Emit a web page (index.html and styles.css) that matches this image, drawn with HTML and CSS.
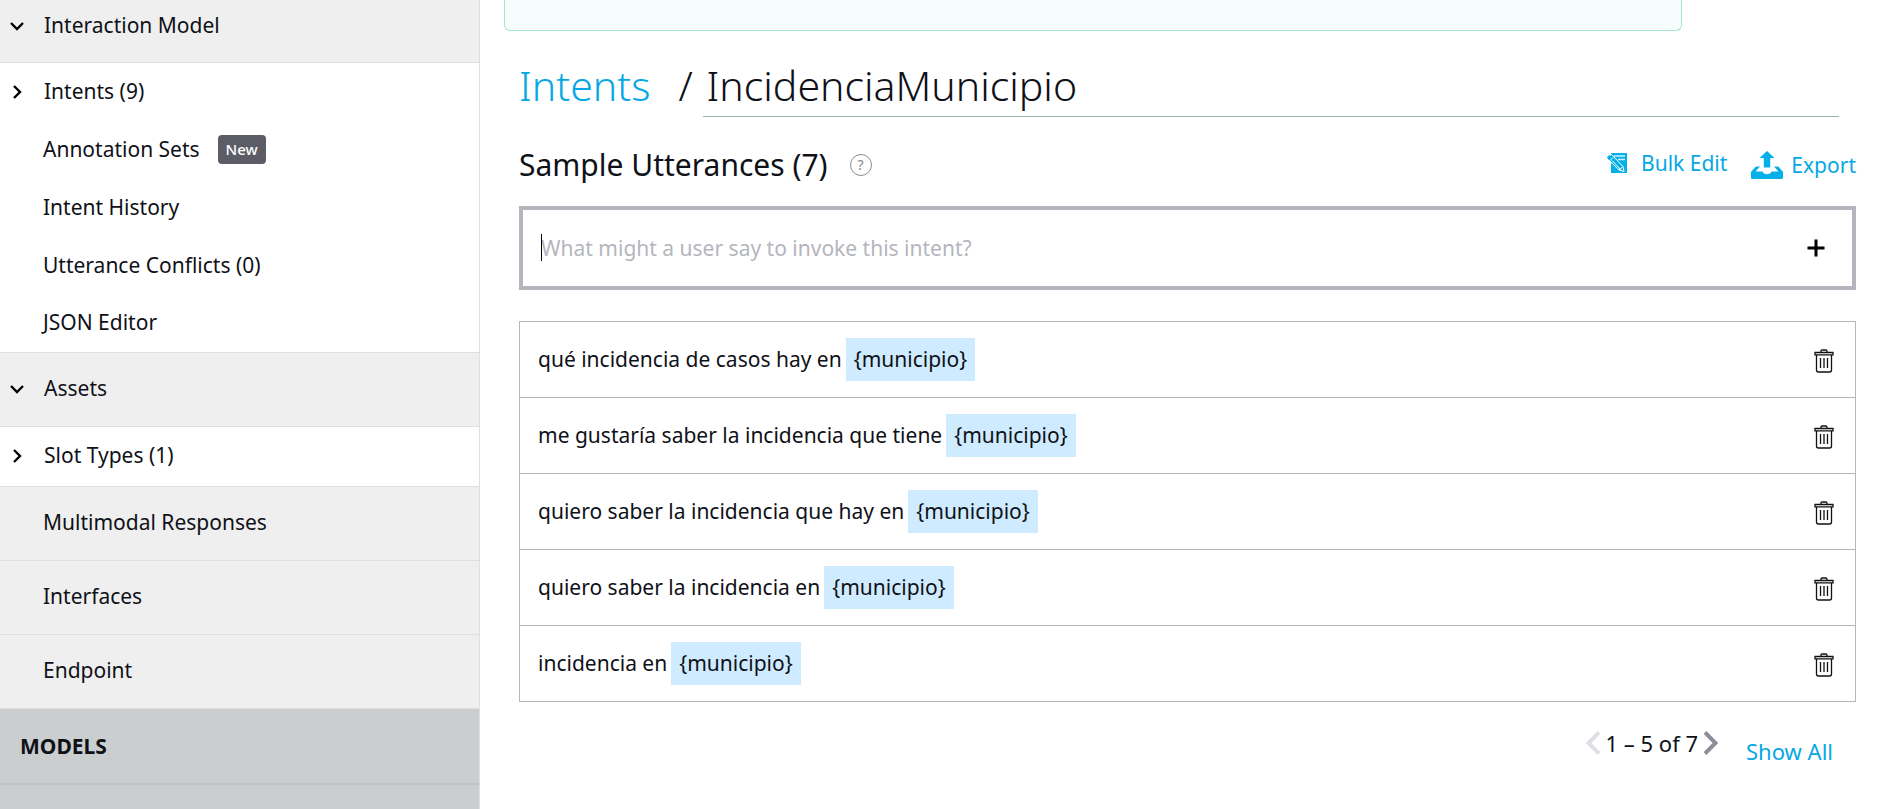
FILE: index.html
```html
<!DOCTYPE html>
<html lang="en">
<head>
<meta charset="utf-8">
<title>IncidenciaMunicipio – Intents</title>
<link rel="stylesheet" href="styles.css">
</head>
<body>
<svg class="defs" aria-hidden="true">
  <symbol id="down" viewBox="0 0 16 16"><path d="M2 5l6 6 6-6" fill="none" stroke="currentColor" stroke-width="2.4"/></symbol>
  <symbol id="right" viewBox="0 0 16 16"><path d="M5 2l6 6-6 6" fill="none" stroke="currentColor" stroke-width="2.4"/></symbol>
  <symbol id="trash" viewBox="0 0 20 24"><g fill="none" stroke="#111" stroke-width="1.3"><path d="M7 3V2.2Q7 1 8.200 1h3.600Q13 1 13 2.200V3"/><path d="M1 3.500h18v2.300H1z"/><path d="M2.500 6v15q0 2 2 2h11q2 0 2-2V6"/><path d="M6.500 9v10M10 9v10M13.500 9v10"/></g></symbol>
</svg>
<div class="page">
  <nav class="sidebar" aria-label="Skill builder">
    <a class="row row-top" href="#"><svg class="chev"><use href="#down"/></svg>Interaction Model</a>
    <div class="group">
      <a class="sub" href="#"><svg class="chev"><use href="#right"/></svg>Intents (9)</a>
      <a class="sub plain" href="#">Annotation Sets<span class="badge">New</span></a>
      <a class="sub plain" href="#">Intent History</a>
      <a class="sub plain" href="#">Utterance Conflicts (0)</a>
      <a class="sub plain" href="#">JSON Editor</a>
    </div>
    <a class="row" href="#"><svg class="chev"><use href="#down"/></svg>Assets</a>
    <div class="group">
      <a class="sub" href="#"><svg class="chev"><use href="#right"/></svg>Slot Types (1)</a>
    </div>
    <a class="row plain" href="#">Multimodal Responses</a>
    <a class="row plain" href="#">Interfaces</a>
    <a class="row plain" href="#">Endpoint</a>
    <h2 class="models">MODELS</h2>
    <div class="rest"></div>
  </nav>
  <main class="main">
    <div class="notice"></div>
    <div class="content">
      <div class="title">
        <a class="link" href="#">Intents</a><span class="slash">/</span>
        <input class="name" type="text" value="IncidenciaMunicipio" aria-label="Intent name">
      </div>
      <div class="head">
        <h1 class="heading">Sample Utterances (7)</h1>
        <button class="help" type="button" aria-label="Help">?</button>
        <button class="action bulk" type="button"><svg class="bulk-icon" viewBox="0 0 20 20"><path d="M4 0h16v20H4z" fill="#05b0e9"/><path d="M7 3h11M11 6.500h7" stroke="#cdeffb" stroke-width="1.300"/><path d="M2 3.500L4.500 1.500 16 13.500l1 5-5-1.500L.800 6z" fill="#05b0e9" stroke="#fff" stroke-width="1"/><path d="M3 7.500L6 4.500M5 7.500l8.500 9M12 17l3.500-3" stroke="#fff" stroke-width="1" fill="none"/><path d="M.500 5.500Q-.500 4 1 3q2-1.500 3.500.500L2 7z" fill="#05b0e9"/></svg>Bulk Edit</button>
        <button class="action" type="button"><svg class="export-icon" viewBox="0 0 32 28"><path d="M16 0l7.500 7H19.200v9.500h-6.400V7H8.500z" fill="#05b0e9"/><path d="M9 15.500L4.500 20.500h7q1 2.800 4.500 2.800t4.500-2.800h7L23 15.500h3.500q1 0 1.500.800L32 21v5.500q0 1.500-1.500 1.500h-29Q0 28 0 26.500V21l4-4.700q.500-.800 1.500-.800z" fill="#05b0e9"/></svg>Export</button>
      </div>
      <form class="entry">
        <input class="utter" type="text" placeholder="What might a user say to invoke this intent?" aria-label="New utterance">
        <button class="add" type="button" aria-label="Add utterance"><svg viewBox="0 0 18 18"><path d="M9 0.500v17M.500 9h17" stroke="#000" stroke-width="3"/></svg></button>
      </form>
      <ul class="list">
        <li class="item"><span>qué incidencia de casos hay en</span><span class="slot">{municipio}</span><button class="del" type="button" aria-label="Delete"><svg><use href="#trash"/></svg></button></li>
        <li class="item"><span>me gustaría saber la incidencia que tiene</span><span class="slot">{municipio}</span><button class="del" type="button" aria-label="Delete"><svg><use href="#trash"/></svg></button></li>
        <li class="item"><span>quiero saber la incidencia que hay en</span><span class="slot">{municipio}</span><button class="del" type="button" aria-label="Delete"><svg><use href="#trash"/></svg></button></li>
        <li class="item"><span>quiero saber la incidencia en</span><span class="slot">{municipio}</span><button class="del" type="button" aria-label="Delete"><svg><use href="#trash"/></svg></button></li>
        <li class="item"><span>incidencia en</span><span class="slot">{municipio}</span><button class="del" type="button" aria-label="Delete"><svg><use href="#trash"/></svg></button></li>
      </ul>
      <div class="pager">
        <button class="page-btn off" type="button" aria-label="Previous page"><svg viewBox="0 0 14 24"><path d="M13 1.500L2.500 12 13 22.500" fill="none" stroke="currentColor" stroke-width="4"/></svg></button>
        <span>1 – 5 of 7</span>
        <button class="page-btn" type="button" aria-label="Next page"><svg viewBox="0 0 14 24"><path d="M1 1.500L11.500 12 1 22.500" fill="none" stroke="currentColor" stroke-width="4"/></svg></button>
        <a class="show-all" href="#">Show All</a>
      </div>
    </div>
  </main>
</div>
</body>
</html>
```
FILE: styles.css
```css
* { box-sizing: border-box; }
body { margin: 0; background: #fff; color: #0f1118; font: 21px/28px "Noto Sans", "Open Sans", sans-serif; }
a { color: inherit; text-decoration: none; }
button { padding: 0; border: 0; background: none; font: inherit; color: inherit; }
svg { display: block; }
.defs { position: absolute; width: 0; height: 0; }
.page { display: flex; min-height: 100vh; }

.sidebar { display: flex; flex-direction: column; flex: 0 0 480px; max-height: 100vh; overflow: hidden; border-right: 1px solid #dcdedf; }
.row, .sub { display: flex; flex: none; align-items: center; padding-left: 9px; }
.row { height: 74px; padding-bottom: 3px; background: #efefef; border-bottom: 1px solid #dfdfdf; }
.row-top { height: 63px; padding-bottom: 13px; }
.group { flex: none; }
.sub { height: 58px; padding-bottom: 3px; }
.sub:last-child { border-bottom: 1px solid #dfdfdf; }
.sub:only-child { height: 60px; }
.plain { padding-left: 43px; }
.chev { width: 16px; height: 16px; margin: 2px 19px 0 0; color: #000; }
.badge { margin: 2px 0 0 18px; padding: 0 8px; border-radius: 4px; background: #5c5c66; color: #fff; font-size: 15px; font-weight: 500; line-height: 29px; }
.models { display: flex; flex: none; align-items: center; height: 76px; margin: 0; padding-left: 20px; background: #cbcecf; border-bottom: 2px solid #bfc1c2; font-size: 21px; font-weight: 700; }
.rest { flex: 1; background: #cbcecf; }

.main { flex: 1; min-width: 0; padding: 0 29px 0 24px; }
.notice { height: 31px; margin-right: 174px; background: #f7fdfd; border: 1px solid #a6e6cd; border-top: 0; border-radius: 0 0 6px 6px; }
.content { padding-left: 15px; }
.title { display: flex; align-items: center; height: 86px; margin-right: 17px; padding-top: 22px; font-size: 41px; font-weight: 300; line-height: 60px; }
.link, .action, .show-all { color: #05a8e4; }
.slash { margin: 0 10px 0 28px; }
.name { flex: 1; min-width: 0; height: 64px; padding: 0 4px; border: 0; border-bottom: 1px solid #9fb0b1; background: none; color: inherit; font: inherit; outline: 0; }
.head { display: flex; align-items: center; height: 89px; padding-top: 6px; }
.heading { margin: 0; font-size: 30px; font-weight: 400; line-height: 40px; }
.help { width: 22px; height: 22px; margin: 0 auto 0 22px; border: 1px solid #87928f; border-radius: 50%; color: #7d8886; font-size: 14px; line-height: 20px; }
.action { display: flex; align-items: center; gap: 8px; margin-left: 24px; }
.bulk { gap: 14px; padding-bottom: 3px; }
.bulk-icon { width: 20px; height: 20px; overflow: visible; }
.export-icon { width: 32px; height: 28px; }

.entry { position: relative; display: flex; align-items: center; height: 84px; margin: 0 0 31px; padding: 0 27px 0 18px; border: 4px solid #b5b5be; }
.entry::before { content: ""; position: absolute; left: 18px; top: 24px; width: 1px; height: 27px; background: #000; }
.utter { flex: 1; min-width: 0; padding: 0; border: 0; background: none; font: inherit; outline: 0; }
.utter::placeholder { color: #b5b5be; opacity: 1; }
.add svg { width: 18px; height: 18px; }

.list { margin: 0; padding: 0; list-style: none; border: 1px solid #b5b5bb; }
.item { display: flex; align-items: center; height: 76px; padding: 0 21px 1px 18px; border-bottom: 1px solid #b5b5bb; }
.item:last-child { height: 75px; border-bottom: 0; }
.slot { margin-left: 4px; padding: 0 8px; background: #ceebff; line-height: 43px; }
.del { margin-left: auto; padding-top: 4px; }
.del svg { width: 20px; height: 24px; }
.pager { display: flex; align-items: center; justify-content: flex-end; gap: 6px; height: 82px; padding-right: 23px; font-size: 22px; }
.page-btn { color: #8d8c9b; }
.page-btn svg { width: 14px; height: 24px; }
.off { color: #dfdfe5; }
.show-all { margin-left: 22px; padding-top: 16px; }
```
